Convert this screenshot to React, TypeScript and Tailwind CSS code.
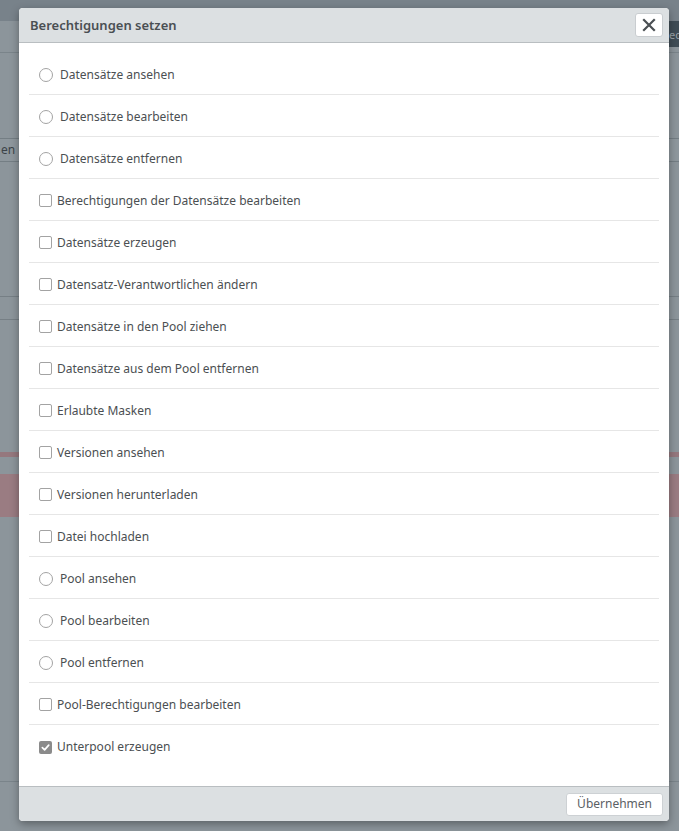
import React from "react";

type Item = { label: string; kind: "radio" | "check"; checked?: boolean };

const items: Item[] = [
  { label: "Datensätze ansehen", kind: "radio" },
  { label: "Datensätze bearbeiten", kind: "radio" },
  { label: "Datensätze entfernen", kind: "radio" },
  { label: "Berechtigungen der Datensätze bearbeiten", kind: "check" },
  { label: "Datensätze erzeugen", kind: "check" },
  { label: "Datensatz-Verantwortlichen ändern", kind: "check" },
  { label: "Datensätze in den Pool ziehen", kind: "check" },
  { label: "Datensätze aus dem Pool entfernen", kind: "check" },
  { label: "Erlaubte Masken", kind: "check" },
  { label: "Versionen ansehen", kind: "check" },
  { label: "Versionen herunterladen", kind: "check" },
  { label: "Datei hochladen", kind: "check" },
  { label: "Pool ansehen", kind: "radio" },
  { label: "Pool bearbeiten", kind: "radio" },
  { label: "Pool entfernen", kind: "radio" },
  { label: "Pool-Berechtigungen bearbeiten", kind: "check" },
  { label: "Unterpool erzeugen", kind: "check", checked: true },
];

function Marker({ item }: { item: Item }) {
  if (item.kind === "radio") {
    return (
      <span className="mr-[7px] h-[14px] w-[14px] shrink-0 rounded-full border border-[#a3a3a3] bg-white" />
    );
  }
  if (item.checked) {
    return (
      <span className="mr-[5px] flex h-[13px] w-[13px] shrink-0 items-center justify-center rounded-[2px] bg-[#8b8b8b]">
        <svg width="9" height="9" viewBox="0 0 10 10" fill="none">
          <path d="M1.5 5.2 L4 7.6 L8.6 2.4" stroke="white" strokeWidth="1.9" strokeLinecap="round" strokeLinejoin="round" />
        </svg>
      </span>
    );
  }
  return (
    <span className="mr-[5px] h-[13px] w-[13px] shrink-0 rounded-[2px] border border-[#a3a3a3] bg-white" />
  );
}

export default function App() {
  const [state, setState] = React.useState(items);

  return (
    <div className="relative h-[831px] w-[679px] overflow-hidden bg-[#8c959b] font-['Noto_Sans',sans-serif]">
      {/* dimmed page behind the dialog */}
      <div className="flex flex-col">
        <div className="flex h-[21px] bg-[#78828a]" />
        <div className="flex h-[26px] justify-end">
          <div className="flex w-[10px] items-center overflow-hidden bg-[#3f4c55] text-[11px] leading-none text-[#9aa3a9]">ec</div>
        </div>
        <div className="h-[5px]" />
        <div className="h-px bg-[#7a848a]" />
        <div className="h-[85px]" />
        <div className="flex h-[24px] items-center border-y border-[#747e84] bg-[#8e979d] pl-[1px] text-[12px] text-[#3c4348]">en</div>
        <div className="h-[134px]" />
        <div className="h-[24px] border-y border-[#767f85]" />
        <div className="h-[132px]" />
        <div className="h-[5px] bg-[#95787e]" />
        <div className="h-[17px]" />
        <div className="h-[43px] bg-[#9a7c82]" />
        <div className="h-[264px]" />
        <div className="h-px bg-[#7a848a]" />
        <div className="flex-1 bg-[#858e94]" />
      </div>

      {/* dialog */}
      <div className="absolute inset-0 pl-[19px] pt-[8px]">
        <div className="flex w-[650px] flex-col overflow-hidden rounded-[4px] bg-white shadow-[0_3px_8px_rgba(0,0,0,0.35)]">
          <div className="flex h-[35px] items-center justify-between border-b border-[#b9bec1] bg-[#dce0e2] pl-[11px] pr-[6px]">
            <span className="pt-[2px] text-[13px] font-semibold text-[#4a4f53]">Berechtigungen setzen</span>
            <button className="flex h-[24px] w-[28px] items-center justify-center rounded-[3px] border border-[#c9cdd0] bg-white">
              <svg width="14" height="14" viewBox="0 0 14 14">
                <path d="M2 2 L12 12 M12 2 L2 12" stroke="#4a4f53" strokeWidth="2.2" strokeLinecap="square" />
              </svg>
            </button>
          </div>

          <div className="flex flex-col px-[10px] pb-[19px] pt-[10px]">
            {state.map((item, i) => (
              <label
                key={item.label}
                className={
                  "flex h-[42px] cursor-pointer items-center pl-[10px] pt-[2px] text-[12px] text-[#4b4f52] " +
                  (i < state.length - 1 ? "border-b border-[#e6e6e6]" : "")
                }
                onClick={() =>
                  item.kind === "check" &&
                  setState((s) => s.map((x, j) => (j === i ? { ...x, checked: !x.checked } : x)))
                }
              >
                <Marker item={item} />
                <span>{item.label}</span>
              </label>
            ))}
          </div>

          <div className="flex h-[35px] items-center justify-end border-t border-[#b9bec1] bg-[#dce0e2] pr-[6px]">
            <button className="h-[23px] rounded-[3px] border border-[#cdd1d4] bg-white px-[10px] text-[12px] text-[#5b6064]">
              Übernehmen
            </button>
          </div>
        </div>
      </div>
    </div>
  );
}
